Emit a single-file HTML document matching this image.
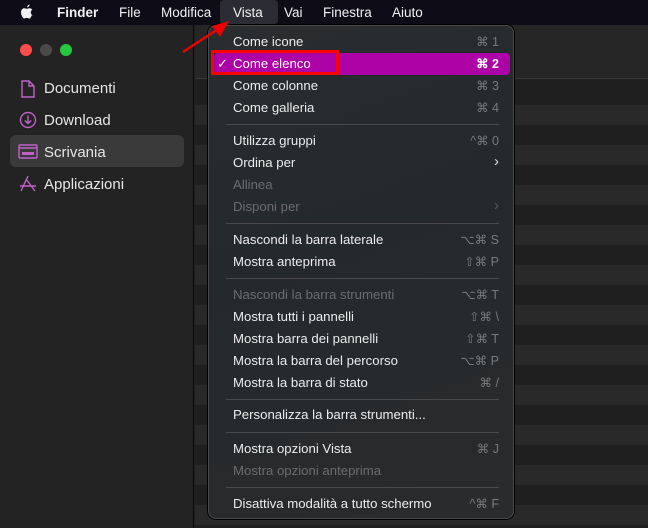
<!DOCTYPE html><html><head><style>
*{margin:0;padding:0;box-sizing:border-box}
body{width:648px;height:528px;overflow:hidden;background:#1f1f1f;font-family:"Liberation Sans",sans-serif;position:relative;color:#e8e8e8}
.mb{position:absolute;left:0;top:0;width:648px;height:25px;background:#0e0c16;font-size:13.5px}
.mb span{position:absolute;top:5px;color:#f0f0f0}
.side{position:absolute;left:0;top:25px;width:194px;height:503px;background:#232323;border-right:1px solid #0a0a0a}
.tb{position:absolute;left:195px;top:25px;width:453px;height:54px;background:#262626;border-bottom:1px solid #3a3a3a}
.row{position:absolute;left:195px;width:453px;height:20px;background:#292929}
.dot{position:absolute;top:44px;width:12px;height:12px;border-radius:50%}
.si{position:absolute;left:44px;font-size:15px;color:#e6e6e6}
.menu{position:absolute;left:208px;top:25px;width:306px;height:494px;border-radius:8px;background:linear-gradient(160deg,#2b2d2f,#24292c 40%,#2a2b2c);border:1px solid #4a4a4a;box-shadow:0 0 0 1px #000}
.it{position:absolute;left:24px;font-size:13.2px;color:#ececec}
.it.d{color:#6c6c6c}
.k{position:absolute;right:14px;font-size:12.5px;color:#7a7a7a;text-align:right}
.k.d{color:#5a5a5a}
.sep{position:absolute;left:17px;right:14px;height:1px;background:#4a4a4a}
</style></head><body>
<div class="mb">
<svg style="position:absolute;left:20px;top:4px" width="14" height="16" viewBox="0 0 14 16"><path d="M9.5 0.5c.2 1.3-.9 2.7-2.3 2.8-.2-1.2 1-2.6 2.3-2.8zM11.8 11.2c-.5 1.2-1.4 3.3-2.7 3.3-1 0-1.3-.6-2.4-.6s-1.5.6-2.4.6C3 14.5 1 11.2 1 8.3 1 5.5 2.8 4.2 4.3 4.2c1 0 1.8.6 2.5.6.7 0 1.6-.7 2.8-.6.5 0 1.9.2 2.700 1.5-2.3 1.4-1.9 4.6.5 5.5z" fill="#f0f0f0"/></svg>
<span style="left:57px;font-weight:bold">Finder</span>
<span style="left:119px">File</span>
<span style="left:161px">Modifica</span>
<div style="position:absolute;left:220px;top:0;width:58px;height:24px;background:#2c2c34;border-radius:4px"></div>
<span style="left:233px">Vista</span>
<span style="left:284px">Vai</span>
<span style="left:323px">Finestra</span>
<span style="left:392px">Aiuto</span>
</div>
<div class="side">
<div class="dot" style="left:20px;top:19px;background:#fe4b4b"></div>
<div class="dot" style="left:40px;top:19px;background:#4a4a4a"></div>
<div class="dot" style="left:60px;top:19px;background:#27c840"></div>
<div style="position:absolute;left:10px;top:110px;width:174px;height:32px;background:#3a3a3a;border-radius:6px"></div>
<svg style="position:absolute;left:20px;top:55px" width="16" height="18" viewBox="0 0 16 18" fill="none" stroke="#c062c8" stroke-width="1.4"><path d="M2 1h7l5 5v11H2z M9 1v5h5"/></svg>
<div class="si" style="top:55px">Documenti</div>
<svg style="position:absolute;left:19px;top:86px" width="18" height="18" viewBox="0 0 18 18" fill="none" stroke="#c062c8" stroke-width="1.4"><circle cx="9" cy="9" r="7.5"/><path d="M9 4.5v8M5.8 9.5L9 12.5l3.2-3"/></svg>
<div class="si" style="top:87px">Download</div>
<svg style="position:absolute;left:18px;top:119px" width="20" height="15" viewBox="0 0 20 15" fill="none" stroke="#c062c8" stroke-width="1.4"><rect x="1" y="1" width="18" height="13" rx="1"/><path d="M1 4h18"/><rect x="4" y="8" width="12" height="3" fill="#c062c8" stroke="none"/></svg>
<div class="si" style="top:119px">Scrivania</div>
<svg style="position:absolute;left:19px;top:150px" width="18" height="17" viewBox="0 0 18 17" fill="none" stroke="#c062c8" stroke-width="1.4"><path d="M9 1L2 16M7 4l9 12M1 11h16"/></svg>
<div class="si" style="top:151px">Applicazioni</div>
</div>
<div class="tb"></div>
<div class="row" style="top:105px"></div><div class="row" style="top:145px"></div><div class="row" style="top:185px"></div><div class="row" style="top:225px"></div><div class="row" style="top:265px"></div><div class="row" style="top:305px"></div><div class="row" style="top:345px"></div><div class="row" style="top:385px"></div><div class="row" style="top:425px"></div><div class="row" style="top:465px"></div><div class="row" style="top:505px"></div>
<div class="menu">
<div style="position:absolute;left:5px;top:27px;width:296px;height:22px;background:#ad03a6;border-radius:4px"></div>
<div class="it" style="top:8px">Come icone</div><div class="k" style="top:8px">⌘ 1</div>
<div class="it" style="top:30px;color:#fff">Come elenco</div><div class="k" style="top:30px;color:#fff;font-weight:bold">⌘ 2</div>
<div class="it" style="top:30px;left:8px;color:#fff">✓</div>
<div class="it" style="top:52px">Come colonne</div><div class="k" style="top:52px">⌘ 3</div>
<div class="it" style="top:74px">Come galleria</div><div class="k" style="top:74px">⌘ 4</div>
<div class="sep" style="top:98px"></div>
<div class="it" style="top:107px">Utilizza gruppi</div><div class="k" style="top:107px">^⌘ 0</div>
<div class="it" style="top:129px">Ordina per</div><div class="k" style="top:127px;color:#ddd;font-size:15px">›</div>
<div class="it d" style="top:151px">Allinea</div>
<div class="it d" style="top:173px">Disponi per</div><div class="k d" style="top:171px;font-size:15px">›</div>
<div class="sep" style="top:197px"></div>
<div class="it" style="top:206px">Nascondi la barra laterale</div><div class="k" style="top:206px">⌥⌘ S</div>
<div class="it" style="top:228px">Mostra anteprima</div><div class="k" style="top:228px">⇧⌘ P</div>
<div class="sep" style="top:252px"></div>
<div class="it d" style="top:261px">Nascondi la barra strumenti</div><div class="k" style="top:261px">⌥⌘ T</div>
<div class="it" style="top:283px">Mostra tutti i pannelli</div><div class="k" style="top:283px">⇧⌘ \</div>
<div class="it" style="top:305px">Mostra barra dei pannelli</div><div class="k" style="top:305px">⇧⌘ T</div>
<div class="it" style="top:327px">Mostra la barra del percorso</div><div class="k" style="top:327px">⌥⌘ P</div>
<div class="it" style="top:349px">Mostra la barra di stato</div><div class="k" style="top:349px">⌘ /</div>
<div class="sep" style="top:373px"></div>
<div class="it" style="top:381px">Personalizza la barra strumenti...</div>
<div class="sep" style="top:406px"></div>
<div class="it" style="top:415px">Mostra opzioni Vista</div><div class="k" style="top:415px">⌘ J</div>
<div class="it d" style="top:437px">Mostra opzioni anteprima</div>
<div class="sep" style="top:461px"></div>
<div class="it" style="top:470px">Disattiva modalità a tutto schermo</div><div class="k" style="top:470px">^⌘ F</div>
</div>
<div style="position:absolute;left:211px;top:50px;width:128px;height:25px;border:3px solid #f00"></div>
<svg style="position:absolute;left:0;top:0" width="648" height="528"><path d="M183 52L218 29" stroke="#e00" stroke-width="2.5"/><path d="M229 21L212 26L220 37z" fill="#e00"/></svg>
</body></html>
